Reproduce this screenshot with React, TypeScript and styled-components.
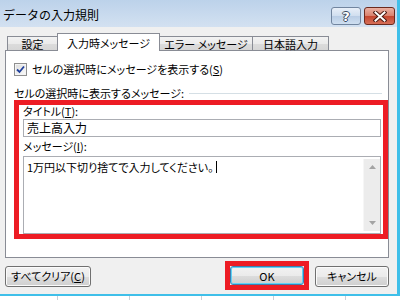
import React from "react";
import styled, { createGlobalStyle } from "styled-components";

const Global = createGlobalStyle`
  html, body { margin: 0; padding: 0; }
  body {
    width: 400px; height: 300px; overflow: hidden; background: #ffffff;
    font-family: "Noto Sans CJK JP", "Noto Sans", sans-serif;
    font-size: 11px; color: #000000;
  }
  * { box-sizing: border-box; }
`;

const Screen = styled.div`
  width: 400px;
  height: 300px;
  display: flex;
  flex-direction: column;
  background: #ffffff;
`;

const Window = styled.div`
  width: 400px;
  height: 296px;
  display: flex;
  flex-direction: column;
  background: #f0f0f0;
  border-right: 3px solid #3fbfe9;
  border-bottom: 2px solid #3fbfe9;
`;

const TitleBar = styled.div`
  height: 27px;
  flex: none;
  display: flex;
  align-items: center;
  justify-content: space-between;
  padding: 0 2px 0 3px;
  background: linear-gradient(#bcd2ea, #d3e1f1);
`;

const TitleText = styled.div`
  font-size: 12px;
  line-height: 14px;
  margin-top: 3px;
`;

const Controls = styled.div`
  display: flex;
  gap: 3px;
  align-self: flex-start;
  margin-top: 7px;
`;

const HelpButton = styled.div`
  width: 30px;
  height: 18px;
  border: 1px solid #71859f;
  border-radius: 3px;
  background: linear-gradient(#e8eff8 0%, #d0deef 50%, #b9cde5 51%, #cfdff1 100%);
  display: flex;
  align-items: center;
  justify-content: center;
  font-family: "DejaVu Sans", sans-serif;
  font-weight: bold;
  font-size: 13px;
  color: #ffffff;
  text-shadow: -1px 0 #3a4a60, 1px 0 #3a4a60, 0 -1px #3a4a60, 0 1px #3a4a60;
`;

const CloseButton = styled.div`
  width: 31px;
  height: 18px;
  border: 1px solid #6b2a1e;
  border-radius: 3px;
  background: linear-gradient(#eab0a2 0%, #d9806c 50%, #c4452e 51%, #d66f58 100%);
  display: flex;
  align-items: center;
  justify-content: center;
`;

const Body = styled.div`
  flex: 1;
  display: flex;
  flex-direction: column;
  padding: 0 8px 0 5px;
`;

const TabStrip = styled.div`
  height: 23px;
  flex: none;
  display: flex;
  align-items: flex-end;
  padding-left: 2px;
`;

const Tab = styled.div<{ $active?: boolean; $w: number }>`
  position: relative;
  width: ${(p) => p.$w}px;
  height: ${(p) => (p.$active ? 18 : 14)}px;
  margin-left: -1px;
  margin-bottom: ${(p) => (p.$active ? -1 : 0)}px;
  z-index: ${(p) => (p.$active ? 1 : 0)};
  border: 1px solid #898c95;
  border-bottom: none;
  background: ${(p) =>
    p.$active ? "#ffffff" : "linear-gradient(#f2f2f2 0%, #ebebeb 50%, #dcdcdc 51%, #d6d6d6 100%)"};
  display: flex;
  align-items: center;
  justify-content: center;
  font-feature-settings: "palt";
  font-size: 11px;
  line-height: 12px;
  padding-top: ${(p) => (p.$active ? 0 : 1)}px;
  &:first-child { margin-left: 0; }
`;

const Panel = styled.div`
  height: 208px;
  flex: none;
  border: 1px solid #898c95;
  background: #ffffff;
  display: flex;
  flex-direction: column;
  padding: 12px 0 0 8px;
  font-feature-settings: "palt";
`;

const CheckRow = styled.div`
  display: flex;
  align-items: center;
  gap: 5px;
  height: 13px;
  line-height: 13px;
`;

const CheckBox = styled.div`
  width: 13px;
  height: 13px;
  border: 1px solid #8f8f8f;
  background: linear-gradient(135deg, #dcdcdc, #fbfbfb);
  box-shadow: inset 0 0 0 1px #f4f4f4;
  display: flex;
  align-items: center;
  justify-content: center;
`;

const GroupHead = styled.div`
  display: flex;
  align-items: center;
  gap: 5px;
  height: 12px;
  line-height: 12px;
  margin: 11px 6px 0 0;
`;

const Rule = styled.div`
  flex: 1;
  height: 1px;
  background: #d5dfe5;
`;

const Highlight = styled.div`
  margin-top: 1px;
  height: 139px;
  border: 5px solid #ed1c24;
  padding: 0 2px 0 4px;
  display: flex;
  flex-direction: column;
`;

const FieldLabel = styled.div<{ $h: number }>`
  height: ${(p) => p.$h}px;
  line-height: ${(p) => p.$h}px;
  flex: none;
`;

const TextInput = styled.div`
  margin-top: 1px;
  height: 18px;
  flex: none;
  border: 1px solid #abadb3;
  padding-left: 3px;
  line-height: 16px;
  font-size: 12px;
  background: #ffffff;
`;

const TextArea = styled.div`
  height: 78px;
  flex: none;
  border: 1px solid #abadb3;
  background: #ffffff;
  display: flex;
  padding: 1px 0 1px 1px;
`;

const AreaText = styled.div`
  flex: 1;
  padding: 3px 0 0 2px;
  line-height: 13px;
  display: flex;
  align-items: flex-start;
`;

const Caret = styled.span`
  display: inline-block;
  width: 1px;
  height: 12px;
  margin-left: 2px;
  background: #000000;
`;

const ScrollBar = styled.div`
  width: 17px;
  margin: 1px 0;
  background: #ececec;
  border-left: 1px solid #f6f6f6;
  display: flex;
  flex-direction: column;
  justify-content: space-between;
  align-items: center;
  padding: 6px 0 6px;
`;

const BottomRow = styled.div`
  flex: 1;
  display: flex;
  align-items: center;
  justify-content: space-between;
`;

const RightButtons = styled.div`
  display: flex;
  align-items: center;
  gap: 6px;
`;

const Button = styled.div<{ $w: number; $focus?: boolean }>`
  width: ${(p) => p.$w}px;
  height: ${(p) => (p.$focus ? 19 : 21)}px;
  border: 1px solid ${(p) => (p.$focus ? "#3c7fb1" : "#707070")};
  border-radius: 3px;
  background: linear-gradient(#f2f2f2 0%, #ebebeb 50%, #dddddd 51%, #cfcfcf 100%);
  box-shadow: ${(p) => (p.$focus ? "inset 0 0 0 1px #5fd2f6" : "inset 0 0 0 1px #fbfbfb")};
  display: flex;
  align-items: center;
  justify-content: center;
  font-feature-settings: "palt";
  line-height: 12px;
`;

const FocusRing = styled.div`
  border: 5px solid #ed1c24;
  margin-top: -1px;
`;

const Sheet = styled.div`
  flex: 1;
  display: flex;
  background: #ffffff;
`;

const SheetCell = styled.div<{ $w: number }>`
  width: ${(p) => p.$w}px;
  flex: none;
  border-right: 1px solid #c9cfd8;
`;

export default function App() {
  return (
    <Screen>
      <Global />
      <Window>
        <TitleBar>
          <TitleText>データの入力規則</TitleText>
          <Controls>
            <HelpButton>?</HelpButton>
            <CloseButton>
              <svg width="14" height="11" viewBox="0 0 14 11">
                <path d="M2.5 1.5 L11.5 9.5 M11.5 1.5 L2.5 9.5" stroke="#4a1a12" strokeWidth="4" strokeLinecap="square" />
                <path d="M2.5 1.5 L11.5 9.5 M11.5 1.5 L2.5 9.5" stroke="#ffffff" strokeWidth="2" strokeLinecap="square" />
              </svg>
            </CloseButton>
          </Controls>
        </TitleBar>
        <Body>
          <TabStrip>
            <Tab $w={51}>設定</Tab>
            <Tab $w={103} $active>入力時メッセージ</Tab>
            <Tab $w={94}>エラー メッセージ</Tab>
            <Tab $w={77}>日本語入力</Tab>
          </TabStrip>
          <Panel>
            <CheckRow>
              <CheckBox>
                <svg width="9" height="9" viewBox="0 0 9 9">
                  <path d="M1 4.5 L3.5 7 L8 1.5" fill="none" stroke="#1f3f9b" strokeWidth="1.8" />
                </svg>
              </CheckBox>
              <span>
                セルの選択時にメッセージを表示する(<u>S</u>)
              </span>
            </CheckRow>
            <GroupHead>
              <span>セルの選択時に表示するメッセージ:</span>
              <Rule />
            </GroupHead>
            <Highlight>
              <FieldLabel $h={13}>
                タイトル(<u>T</u>):
              </FieldLabel>
              <TextInput>売上高入力</TextInput>
              <FieldLabel $h={19}>
                メッセージ(<u>I</u>):
              </FieldLabel>
              <TextArea>
                <AreaText>
                  <span>1万円以下切り捨てで入力してください。</span>
                  <Caret />
                </AreaText>
                <ScrollBar>
                  <svg width="7" height="4" viewBox="0 0 7 4">
                    <path d="M0 4 L3.5 0 L7 4 Z" fill="#a3a3a3" />
                  </svg>
                  <svg width="7" height="4" viewBox="0 0 7 4">
                    <path d="M0 0 L3.5 4 L7 0 Z" fill="#a3a3a3" />
                  </svg>
                </ScrollBar>
              </TextArea>
            </Highlight>
          </Panel>
          <BottomRow>
            <Button $w={86}>
              すべてクリア(<u>C</u>)
            </Button>
            <RightButtons>
              <FocusRing>
                <Button $w={74} $focus>
                  OK
                </Button>
              </FocusRing>
              <Button $w={74}>キャンセル</Button>
            </RightButtons>
          </BottomRow>
        </Body>
      </Window>
      <Sheet>
        <SheetCell $w={58} />
        <SheetCell $w={72} />
        <SheetCell $w={72} />
        <SheetCell $w={72} />
        <SheetCell $w={72} />
      </Sheet>
    </Screen>
  );
}
